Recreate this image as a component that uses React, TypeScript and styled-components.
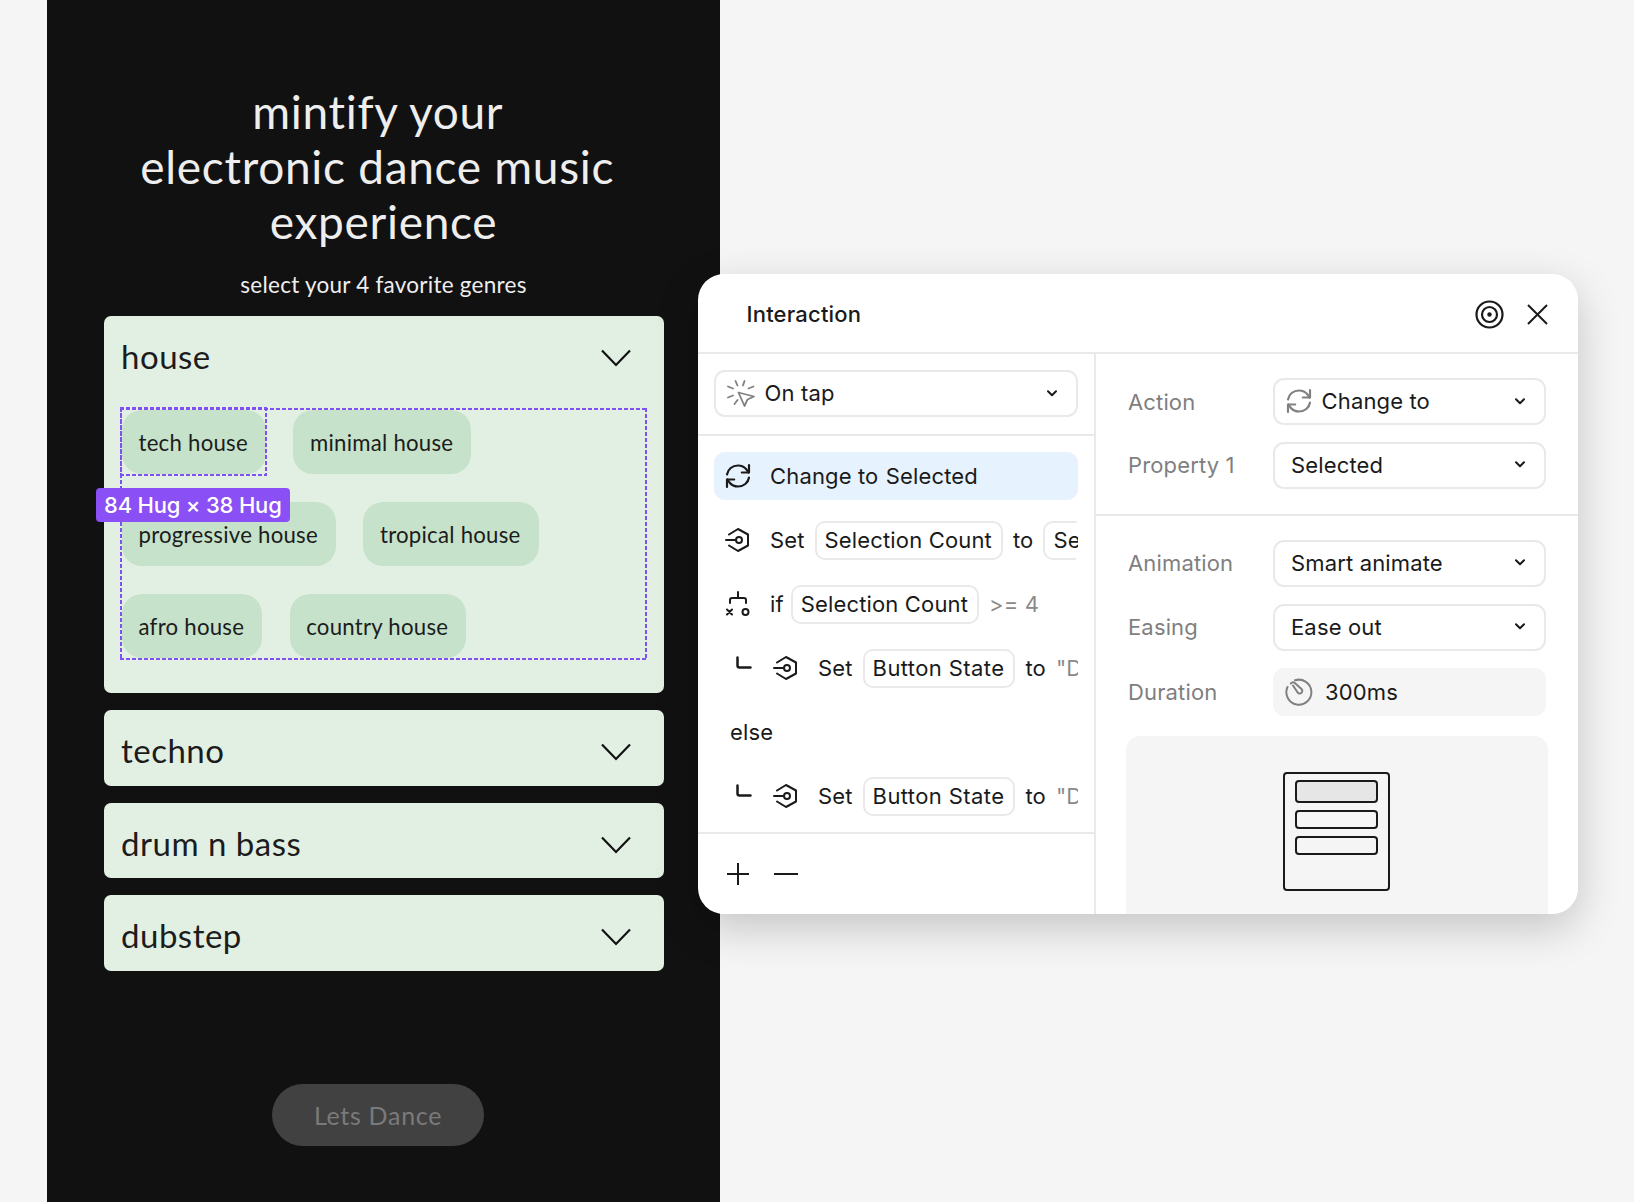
import React from 'react'
import styled, {createGlobalStyle, css} from 'styled-components'

/*---Styles---*/
const GlobalStyle = createGlobalStyle`
  html, body {
    margin: 0;
    padding: 0;
    background: #f5f5f5;
  }
  body {
    width: 1634px;
    height: 1202px;
    overflow: hidden;
    font-family: "Inter", "Liberation Sans", sans-serif;
  }
  * { box-sizing: border-box; }
`

// figma selection outline, css dashed comes out too long
const dashedOutline = css`
  background-image:
    linear-gradient(90deg, #8050f0 4px, transparent 4px),
    linear-gradient(90deg, #8050f0 4px, transparent 4px),
    linear-gradient(#8050f0 4px, transparent 4px),
    linear-gradient(#8050f0 4px, transparent 4px);
  background-size: 6px 2px, 6px 2px, 2px 6px, 2px 6px;
  background-position: 0 0, 0 100%, 0 0, 100% 0;
  background-repeat: repeat-x, repeat-x, repeat-y, repeat-y;
`

const Page = styled.div`
  position: relative;
  width: 1634px;
  height: 1202px;
  overflow: hidden;
  background: #f5f5f5;
`

const Screen = styled.section`
  margin-left: 47px;
  width: 673px;
  height: 1202px;
  background: #111112;
  display: flex;
  flex-direction: column;
  font-family: "Lato", "Noto Sans", sans-serif;
`

const Title = styled.h1`
  margin: 0;
  padding-top: 84px;
  font-size: 46px;
  line-height: 55px;
  font-weight: 400;
  letter-spacing: 0.7px;
  color: #eeeeee;
  text-align: center;
  white-space: pre;
`

const Subtitle = styled.p`
  margin: 22px 0 0;
  font-size: 22.5px;
  line-height: 28px;
  letter-spacing: 0.25px;
  color: #eeeeee;
  text-align: center;
`

const CardList = styled.div`
  margin: 17px 0 0 57px;
  width: 560px;
  display: flex;
  flex-direction: column;
  gap: 17px;
`

const Card = styled.div<{$open?: boolean}>`
  height: ${p => (p.$open ? '377px' : '75.5px')};
  background: #e2f0e3;
  border-radius: 7px;
  padding: 0 17px;
`

const CardHeader = styled.div<{$open?: boolean}>`
  height: 84px;
  margin-bottom: ${p => (p.$open ? '8px' : '0')};
  display: flex;
  align-items: center;
  justify-content: space-between;
  padding-right: 16px;
  font-size: 33px;
  letter-spacing: 0.5px;
  color: #1c1c1c;
`

const CardTitle = styled.span`
  margin-bottom: 4px;
`

const ChipArea = styled.div`
  position: relative;
  margin: 0 0 0 -1px;
  width: 527px;
  height: 252px;
  padding: 2px;
  ${dashedOutline}
  display: flex;
  flex-direction: column;
  gap: 28px;
`

const ChipRow = styled.div`
  display: flex;
  gap: 27.5px;
`

const Chip = styled.div<{$selected?: boolean}>`
  position: relative;
  height: 64px;
  padding: 0 18px 0 16.5px;
  display: flex;
  align-items: center;
  background: #c6e2ca;
  border-radius: 20px;
  font-size: 22.2px;
  letter-spacing: 0.25px;
  color: #1c1c1c;

  ${p => p.$selected && css`
    &:after {
      content: '';
      position: absolute;
      inset: -3px -1px -2px -2px;
      ${dashedOutline}
    }
  `}
`

const SizeBadge = styled.div`
  position: absolute;
  left: -24px;
  top: 80px;
  z-index: 2;
  height: 34px;
  padding: 0 8px;
  display: flex;
  align-items: center;
  border-radius: 4px;
  background: #8a4ff5;
  color: #fff;
  font-family: "Inter", sans-serif;
  font-size: 22px;
  font-weight: 500;
  letter-spacing: -0.2px;
  white-space: nowrap;
`

const DanceButton = styled.div`
  margin: 113px 0 0 225px;
  width: 212px;
  height: 62px;
  border-radius: 31px;
  background: #414141;
  color: #7a7a7a;
  font-size: 25px;
  letter-spacing: 0.7px;
  display: flex;
  align-items: center;
  justify-content: center;
`

const Panel = styled.aside`
  position: absolute;
  left: 698px;
  top: 274px;
  width: 880px;
  height: 640px;
  background: #fff;
  border-radius: 26px;
  overflow: hidden;
  color: #1a1a1a;
  font-size: 22px;
  letter-spacing: 0.15px;
  display: flex;
  flex-direction: column;
`

const PanelShadow = styled(Panel)`
  overflow: visible;
  background: transparent;
  box-shadow: 0 14px 44px rgba(0, 0, 0, 0.2);
`

const PanelHeader = styled.header`
  flex: none;
  height: 80px;
  padding: 2px 30px 0 48.5px;
  display: flex;
  align-items: center;
  justify-content: space-between;
  border-bottom: 2px solid #e9e9e9;
  font-weight: 500;
  letter-spacing: 0.2px;
`

const HeaderIcons = styled.div`
  display: flex;
  align-items: center;
  gap: 23px;
`

const PanelBody = styled.div`
  flex: 1;
  min-height: 0;
  display: grid;
  grid-template-columns: 398px 1fr;
`

const LeftCol = styled.div`
  display: flex;
  flex-direction: column;
  border-right: 2px solid #e9e9e9;
`

const TriggerSection = styled.div`
  padding: 16px 16px 17px;
  border-bottom: 2px solid #e9e9e9;
`

const SelectBox = styled.div<{$plain?: boolean}>`
  height: 47px;
  display: flex;
  align-items: center;
  gap: 9.5px;
  padding: 0 19px 1px ${p => (p.$plain ? '16px' : '11px')};
  border: 2px solid #e9e9e9;
  border-radius: 11px;
  white-space: nowrap;
`

const Grow = styled.span`
  flex: 1;
`

const StepList = styled.div`
  padding: 16px 0 12px 16px;
  border-bottom: 2px solid #e9e9e9;
  display: flex;
  flex-direction: column;
  gap: 16px;
`

const Step = styled.div<{$active?: boolean; $nested?: boolean}>`
  width: 364px;
  height: 48px;
  padding-left: ${p => (p.$nested ? '22px' : '11px')};
  display: flex;
  align-items: center;
  gap: 10px;
  overflow: hidden;
  white-space: nowrap;
  border-radius: 11px;
  background: ${p => (p.$active ? '#e6f2fd' : 'transparent')};
`

const StepIcon = styled.span<{$right?: number; $width?: number; $lift?: boolean}>`
  flex: none;
  display: inline-flex;
  align-items: center;
  justify-content: center;
  width: ${p => p.$width ?? 26}px;
  margin-right: ${p => p.$right ?? 9}px;
  margin-bottom: ${p => (p.$lift ? '11px' : '0')};
`

const Pill = styled.span`
  flex: none;
  height: 39px;
  padding: 0 9px 0 8px;
  display: inline-flex;
  align-items: center;
  border: 2px solid #e9e9e9;
  border-radius: 10px;
`

const WidePill = styled(Pill)`
  letter-spacing: 0.4px;
`

const IfWord = styled.span`
  margin-right: -3px;
`

const WordGap = styled.span`
  margin-left: 1px;
`

const Muted = styled.span`
  color: #8a8a8a;
`

const ElseLabel = styled.div`
  height: 48px;
  padding-left: 16px;
  display: flex;
  align-items: center;
`

const StepFooter = styled.div`
  padding: 29px 0 0 29px;
  display: flex;
  align-items: center;
  gap: 25px;
`

const RightCol = styled.div`
  display: flex;
  flex-direction: column;
  min-height: 0;
`

const FieldGroup = styled.div<{$divided?: boolean}>`
  padding: 24px 30px ${p => (p.$divided ? '25px' : '0')} 32px;
  border-bottom: ${p => (p.$divided ? '2px solid #e9e9e9' : '0')};
  display: flex;
  flex-direction: column;
  gap: ${p => (p.$divided ? '16.5px' : '17px')};
`

const FieldRow = styled.div`
  display: grid;
  grid-template-columns: 145px 273px;
  align-items: center;
`

const FieldLabel = styled.span`
  color: #7f7f7f;
`

const ReadOnlyBox = styled.div`
  height: 48px;
  padding: 0 12px;
  display: flex;
  align-items: center;
  gap: 12px;
  border-radius: 11px;
  background: #f5f5f5;
`

const Preview = styled.div`
  flex: none;
  margin: 20px 30px 0;
  height: 240px;
  padding: 36px 2px 0 0;
  background: #f5f5f5;
  border-radius: 14px;
  display: flex;
  justify-content: center;
`

const PreviewFrame = styled.div`
  width: 107px;
  height: 119px;
  padding: 6px 10px;
  border: 2px solid #1a1a1a;
  border-radius: 4px;
  display: flex;
  flex-direction: column;
  gap: 7px;
`

const PreviewBar = styled.div<{$filled?: boolean}>`
  height: ${p => (p.$filled ? '23px' : '19px')};
  border: 2px solid #1a1a1a;
  border-radius: 4px;
  background: ${p => (p.$filled ? '#e6e6e6' : 'transparent')};
`

/*----Icons----*/
const Chevron = () => (
  <svg width="30" height="18" viewBox="0 0 30 18" fill="none" stroke="#111" strokeWidth="2.2">
    <path d="M1 1.5 15 16 29 1.5" />
  </svg>
)

const SmallChevron = () => (
  <svg width="10" height="7" viewBox="0 0 10 7" fill="none" stroke="#1a1a1a" strokeWidth="2" strokeLinecap="round" strokeLinejoin="round">
    <path d="M1 1.2 5 5.2 9 1.2" />
  </svg>
)

const ChangeIcon = ({color = '#1a1a1a'}: {color?: string}) => (
  <svg width="26" height="26" viewBox="0 0 26 26" fill="none" stroke={color} strokeWidth="2.2" strokeLinecap="round" strokeLinejoin="round">
    <path d="M2 11.5C2.8 6.2 7.4 2.5 13 2.5c3.4 0 6.4 1.4 8.5 4l2 3" />
    <path d="M24 2v7.5h-7.2" />
    <path d="M24 14.5c-.8 5.300-5.400 9-11 9-3.400 0-6.400-1.400-8.500-4l-2-3" />
    <path d="M2 24v-7.500h7.200" />
  </svg>
)

const SetIcon = () => (
  <svg width="26" height="26" viewBox="0 0 26 26" fill="none" stroke="#1a1a1a" strokeWidth="2" strokeLinecap="round" strokeLinejoin="round">
    <path d="M4 7.500 13 2l10 5.500v11L13 24l-9-5.500" />
    <path d="M1 13h10" />
    <circle cx="14" cy="13" r="3" />
  </svg>
)

const BranchIcon = () => (
  <svg width="26" height="26" viewBox="0 0 26 26" fill="none" stroke="#1a1a1a" strokeWidth="2" strokeLinecap="round" strokeLinejoin="round">
    <path d="M13 1v6" />
    <path d="M5 12V9a2 2 0 0 1 2-2h12a2 2 0 0 1 2 2v3" />
    <path d="M2 18.500l5 5M7 18.500l-5 5" />
    <circle cx="20.500" cy="21" r="3" />
  </svg>
)

const TapIcon = () => (
  <svg width="28" height="28" viewBox="0 0 28 28" fill="none" stroke="#808080" strokeWidth="1.800" strokeLinecap="round" strokeLinejoin="round">
    <path d="M11.500 13.500 27 17.500 20.500 20.500 17.500 27Z" />
    <path d="M8.500 2l2 4.500M17.500 2l-1.500 4.500M1 7.500l5 2M26.500 7.500l-5 2M1 18.500l5-2M7.500 25l3-4" />
  </svg>
)

const TimerIcon = () => (
  <svg width="28" height="28" viewBox="0 0 28 28" fill="none" stroke="#808080" strokeWidth="2" strokeLinecap="round" strokeLinejoin="round">
    <path d="M10 2.300A12.500 12.500 0 1 1 2.500 9" />
    <path d="M5.800 5.500c1-1 2.700-1.500 3.700-.7l7 6.200c1.200 1.100 1 3-.2 4-1.200 1-3 .7-3.800-.7L8 7.500" />
  </svg>
)

const TargetIcon = () => (
  <svg width="29" height="29" viewBox="0 0 29 29" fill="none" stroke="#1a1a1a" strokeWidth="2.200">
    <circle cx="14.500" cy="14.500" r="13" />
    <circle cx="14.500" cy="14.500" r="7.500" />
    <circle cx="14.500" cy="14.500" r="2.200" fill="#1a1a1a" stroke="none" />
  </svg>
)

const CloseIcon = () => (
  <svg width="21" height="21" viewBox="0 0 21 21" fill="none" stroke="#1a1a1a" strokeWidth="2">
    <path d="M1 1l19 19M20 1 1 20" />
  </svg>
)

const ElbowIcon = () => (
  <svg width="16" height="14" viewBox="0 0 16 14" fill="none" stroke="#1a1a1a" strokeWidth="2.500" strokeLinecap="round">
    <path d="M1.500 1.500v8a2 2 0 0 0 2 2h11" />
  </svg>
)

const PlusIcon = () => (
  <svg width="22" height="22" viewBox="0 0 22 22" fill="none" stroke="#1a1a1a" strokeWidth="2">
    <path d="M11 0v22M0 11h22" />
  </svg>
)

const MinusIcon = () => (
  <svg width="24" height="22" viewBox="0 0 24 22" fill="none" stroke="#1a1a1a" strokeWidth="2">
    <path d="M0 11h24" />
  </svg>
)

/*-----Data-----*/
const chipRows = [
  ['tech house', 'minimal house'],
  ['progressive house', 'tropical house'],
  ['afro house', 'country house'],
]

const collapsed = ['techno', 'drum n bass', 'dubstep']

const NestedSet = () => (
  <Step $nested>
    <StepIcon $width={16} $right={11} $lift><ElbowIcon /></StepIcon>
    <StepIcon $right={9}><SetIcon /></StepIcon>
    <span>Set</span>
    <WidePill>Button State</WidePill>
    <span>to</span>
    <Muted>"Default"</Muted>
  </Step>
)

const Select = ({label, icon}: {label: string; icon?: React.ReactNode}) => (
  <SelectBox $plain={!icon}>
    {icon}
    <span>{label}</span>
    <Grow />
    <SmallChevron />
  </SelectBox>
)

export default function App(){
  return(
    <Page>
      <GlobalStyle />
      <Screen>
        <Title>{'mintify your \nelectronic dance music \nexperience'}</Title>
        <Subtitle>select your 4 favorite genres</Subtitle>
        <CardList>
          <Card $open>
            <CardHeader $open><CardTitle>house</CardTitle><Chevron /></CardHeader>
            <ChipArea>
              <SizeBadge>84 Hug × 38 Hug</SizeBadge>
              {chipRows.map((row, index)=>(
                <ChipRow key={index}>
                  {row.map(item=>(
                    <Chip key={item} $selected={item === 'tech house'}>{item}</Chip>
                  ))}
                </ChipRow>
              ))}
            </ChipArea>
          </Card>
          {collapsed.map(item=>(
            <Card key={item}>
              <CardHeader><CardTitle>{item}</CardTitle><Chevron /></CardHeader>
            </Card>
          ))}
        </CardList>
        <DanceButton>Lets Dance</DanceButton>
      </Screen>

      <PanelShadow />
      <Panel>
        <PanelHeader>
          Interaction
          <HeaderIcons>
            <TargetIcon />
            <CloseIcon />
          </HeaderIcons>
        </PanelHeader>
        <PanelBody>
          <LeftCol>
            <TriggerSection>
              <Select label="On tap" icon={<TapIcon />} />
            </TriggerSection>
            <StepList>
              <Step $active>
                <StepIcon><ChangeIcon /></StepIcon>
                <span>Change to <WordGap>Selected</WordGap></span>
              </Step>
              <Step>
                <StepIcon><SetIcon /></StepIcon>
                <span>Set</span>
                <Pill>Selection Count</Pill>
                <span>to</span>
                <Pill>Selection Count</Pill>
              </Step>
              <Step>
                <StepIcon><BranchIcon /></StepIcon>
                <IfWord>if</IfWord>
                <Pill>Selection Count</Pill>
                <Muted>&gt;= 4</Muted>
              </Step>
              <NestedSet />
              <ElseLabel>else</ElseLabel>
              <NestedSet />
            </StepList>
            <StepFooter>
              <PlusIcon />
              <MinusIcon />
            </StepFooter>
          </LeftCol>
          <RightCol>
            <FieldGroup $divided>
              <FieldRow>
                <FieldLabel>Action</FieldLabel>
                <Select label="Change to" icon={<ChangeIcon color="#808080" />} />
              </FieldRow>
              <FieldRow>
                <FieldLabel>Property 1</FieldLabel>
                <Select label="Selected" />
              </FieldRow>
            </FieldGroup>
            <FieldGroup>
              <FieldRow>
                <FieldLabel>Animation</FieldLabel>
                <Select label="Smart animate" />
              </FieldRow>
              <FieldRow>
                <FieldLabel>Easing</FieldLabel>
                <Select label="Ease out" />
              </FieldRow>
              <FieldRow>
                <FieldLabel>Duration</FieldLabel>
                <ReadOnlyBox><TimerIcon />300ms</ReadOnlyBox>
              </FieldRow>
            </FieldGroup>
            <Preview>
              <PreviewFrame>
                <PreviewBar $filled />
                <PreviewBar />
                <PreviewBar />
              </PreviewFrame>
            </Preview>
          </RightCol>
        </PanelBody>
      </Panel>
    </Page>
  )
}
